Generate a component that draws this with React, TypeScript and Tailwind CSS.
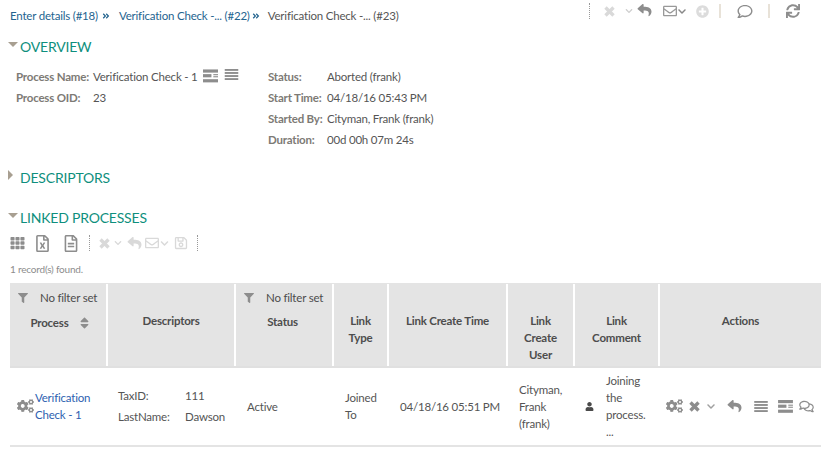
import { FaCogs, FaReply, FaRegEnvelope, FaPlusCircle, FaRegComment, FaSync, FaTh, FaRegFileExcel, FaRegFileAlt, FaRegSave, FaFilter, FaSort, FaUser, FaChevronDown, FaRegComments, FaAngleDoubleRight } from "react-icons/fa"

function XIcon({ className }: { className?: string }) {
  return (
    <svg viewBox="0 0 11 11" className={className} fill="none" stroke="currentColor" strokeWidth="3.4">
      <path d="M1.5 1.5 L9.5 9.5 M9.5 1.5 L1.5 9.5" />
    </svg>
  )
}

function LinesIcon({ className }: { className?: string }) {
  return (
    <svg viewBox="0 0 16 13" className={className} fill="currentColor">
      <rect x="0" y="0" width="16" height="2.2" />
      <rect x="0" y="3.6" width="16" height="2.2" />
      <rect x="0" y="7.2" width="16" height="2.2" />
      <rect x="0" y="10.8" width="16" height="2.2" />
    </svg>
  )
}

function DetailIcon({ className }: { className?: string }) {
  return (
    <svg viewBox="0 0 16 14" className={className} fill="currentColor">
      <rect x="0" y="0" width="16" height="3.4" />
      <rect x="0" y="5" width="9" height="3.4" />
      <rect x="11" y="5" width="5" height="1.2" />
      <rect x="11" y="7.2" width="5" height="1.2" />
      <rect x="0" y="10.4" width="16" height="3.4" />
    </svg>
  )
}

function Heading({ label, open }: { label: string; open: boolean }) {
  return (
    <div className="flex items-center h-5 pl-2">
      {open ? (
        <span className="w-0 h-0 border-x-[5px] border-x-transparent border-t-[5px] border-t-[#a89f91] mr-[2px] -mt-1" />
      ) : (
        <span className="w-0 h-0 border-y-[5px] border-y-transparent border-l-[5px] border-l-[#a89f91] mr-[7px] -mt-1" />
      )}
      <h2 className="text-[14px] text-[#0e8f7d] uppercase">{label}</h2>
    </div>
  )
}

function Field({ label, value, w }: { label: string; value: string; w: string }) {
  return (
    <div className="flex h-[21px] items-center whitespace-nowrap">
      <span className={`${w} font-bold text-[#7d7a75]`}>{label}</span>
      <span>{value}</span>
    </div>
  )
}

const headerCell = "bg-[#e4e4e4] flex flex-col items-center text-center font-bold text-[#4d4d4d] leading-[17px] pt-[28px]"
const filterRow = "flex items-center w-full h-[26px] pl-[8px] pt-[1px] font-normal text-[#4d4d4d] whitespace-nowrap"

export default function App() {
  return (
    <div className="w-[821px] h-[456px] overflow-hidden bg-white text-[11.5px] tracking-[-0.2px] text-[#555] font-['Lato',sans-serif]">
      {/* Breadcrumb + toolbar */}
      <div className="flex items-center h-[32px] pl-[10px]">
        <a className="text-[#24648f]">Enter details (#18)</a>
        <FaAngleDoubleRight className="w-[8px] h-[8px] ml-[4px] mr-[9px] text-[#24648f]" />
        <a className="text-[#24648f]">Verification Check -... (#22)</a>
        <FaAngleDoubleRight className="w-[8px] h-[8px] ml-[2px] mr-[8px] text-[#24648f]" />
        <span className="text-[#555]">Verification Check -... (#23)</span>
        <div className="ml-auto flex items-center h-[22px] pr-[21px] -mt-[10px]">
          <div className="border-l border-dotted border-[#999] h-[16px] mr-[14px]" />
          <XIcon className="w-[11px] h-[11px] text-[#d9d9d9] mr-[10px]" />
          <FaChevronDown className="w-[8px] h-[8px] text-[#cfcfcf] mr-[4px]" />
          <FaReply className="w-[15px] h-[14px] text-[#8d8d8d] mr-[11px] -mt-[2px]" />
          <FaRegEnvelope className="w-[14px] h-[14px] text-[#999]" />
          <FaChevronDown className="w-[10px] h-[9px] text-[#888] mr-[9px]" />
          <FaPlusCircle className="w-[13px] h-[13px] text-[#dcdcdc] mr-[10px]" />
          <div className="border-l-2 border-[#e8e2d8] h-[14px] mr-[16px]" />
          <FaRegComment className="w-[16px] h-[15px] text-[#8d8d8d] mr-[15px]" />
          <div className="border-l-2 border-[#e8e2d8] h-[14px] mr-[16px]" />
          <FaSync className="w-[14px] h-[14px] text-[#8d8d8d]" />
        </div>
      </div>

      {/* Overview */}
      <div className="mt-[4px]">
        <Heading label="Overview" open />
      </div>
      <div className="flex pl-[16px] mt-[10px]">
        <div className="w-[252px]">
          <div className="flex h-[21px] items-center whitespace-nowrap">
            <span className="w-[76px] font-bold text-[#7d7a75]">Process Name:</span>
            <span className="ml-[1px]">Verification Check - 1</span>
            <DetailIcon className="w-[15px] h-[14px] ml-[5px] text-[#8d8d8d] -mt-[2px]" />
            <LinesIcon className="w-[15px] h-[11px] ml-[6px] text-[#8d8d8d] -mt-[4px]" />
          </div>
          <Field label="Process OID:" value="23" w="w-[77px]" />
        </div>
        <div>
          <Field label="Status:" value="Aborted (frank)" w="w-[59px]" />
          <Field label="Start Time:" value="04/18/16 05:43 PM" w="w-[59px]" />
          <Field label="Started By:" value="Cityman, Frank (frank)" w="w-[59px]" />
          <Field label="Duration:" value="00d 00h 07m 24s" w="w-[59px]" />
        </div>
      </div>

      <div className="mt-[17px]">
        <Heading label="Descriptors" open={false} />
      </div>
      <div className="mt-[20px]">
        <Heading label="Linked Processes" open />
      </div>

      {/* Grid toolbar */}
      <div className="flex items-center h-[18px] pl-[10px] mt-[7px]">
        <FaTh className="w-[15px] h-[14px] text-[#8d8d8d] mr-[10px]" />
        <FaRegFileExcel className="w-[15px] h-[17px] text-[#8d8d8d] mr-[14px]" />
        <FaRegFileAlt className="w-[14px] h-[17px] text-[#8d8d8d] mr-[11px]" />
        <div className="border-l border-dotted border-[#999] h-[16px] mr-[9px]" />
        <XIcon className="w-[11px] h-[11px] text-[#d9d9d9] mr-[4px]" />
        <FaChevronDown className="w-[8px] h-[8px] text-[#d9d9d9] mr-[5px]" />
        <FaReply className="w-[15px] h-[14px] text-[#d9d9d9] mr-[3px]" />
        <FaRegEnvelope className="w-[14px] h-[14px] text-[#d9d9d9]" />
        <FaChevronDown className="w-[11px] h-[9px] text-[#d9d9d9] mr-[4px]" />
        <FaRegSave className="w-[14px] h-[14px] text-[#d9d9d9] mr-[9px]" />
        <div className="border-l border-dotted border-[#999] h-[16px]" />
      </div>

      <div className="pl-[10px] mt-[10px] text-[10px] leading-[14px] text-[#8d8d8d]">1 record(s) found.</div>

      {/* Linked processes table */}
      <div className="ml-[10px] mt-[7px] w-[811px]">
        <div className="grid grid-cols-[96px_126px_96px_53px_117px_65px_83px_1fr] gap-x-[2px] h-[85px] border-t border-[#e4e4e4] border-b-2 border-b-[#e0e0e0]">
          <div className="bg-[#e4e4e4] flex flex-col items-center font-bold text-[#4d4d4d]">
            <div className={filterRow}>
              <FaFilter className="w-[10px] h-[10px] text-[#8d8d8d] mr-[12px]" />
              No filter set
            </div>
            <div className="flex items-center mt-[1px] h-[24px] pl-[4px]">
              Process
              <FaSort className="w-[11px] h-[14px] ml-[10px] text-[#8d8d8d]" />
            </div>
          </div>
          <div className={headerCell}>Descriptors</div>
          <div className="bg-[#e4e4e4] flex flex-col items-center font-bold text-[#4d4d4d]">
            <div className={filterRow}>
              <FaFilter className="w-[10px] h-[10px] text-[#8d8d8d] mr-[12px]" />
              No filter set
            </div>
            <div className="flex items-center h-[24px] -ml-[3px]">Status</div>
          </div>
          <div className={headerCell}>Link<br />Type</div>
          <div className={headerCell}>Link Create Time</div>
          <div className={headerCell}>Link<br />Create<br />User</div>
          <div className={headerCell}>Link<br />Comment</div>
          <div className={headerCell}>Actions</div>
        </div>
        <div className="grid grid-cols-[96px_126px_96px_53px_117px_65px_83px_1fr] gap-x-[2px] h-[79px] pb-[1px] items-center leading-[17px] border-b-2 border-[#e4e4e4]">
          <div className="flex items-center pl-[7px]">
            <FaCogs className="w-[17px] h-[14px] text-[#8d8d8d] mr-[1px] shrink-0" />
            <a className="text-[#2d5fb0]">Verification<br />Check - 1</a>
          </div>
          <div className="pl-[10px] grid grid-cols-[67px_1fr] gap-y-[4px] leading-[17px]">
            <span>TaxID:</span>
            <span>111</span>
            <span>LastName:</span>
            <span>Dawson</span>
          </div>
          <div className="pl-[11px]">Active</div>
          <div className="pl-[11px]">Joined<br />To</div>
          <div className="pl-[11px] whitespace-nowrap">04/18/16 05:51 PM</div>
          <div className="pl-[11px]">Cityman,<br />Frank<br />(frank)</div>
          <div className="flex items-center pl-[10px]">
            <FaUser className="w-[9px] h-[9px] text-[#4a4a4a] mr-[12px] shrink-0" />
            <span>Joining<br />the<br />process.<br />...</span>
          </div>
          <div className="flex items-center pl-[6px] text-[#8d8d8d]">
            <FaCogs className="w-[17px] h-[14px] mr-[6px]" />
            <XIcon className="w-[11px] h-[11px] mr-[6px]" />
            <FaChevronDown className="w-[10px] h-[9px] mr-[11px] text-[#a0a0a0]" />
            <FaReply className="w-[15px] h-[14px] mr-[11px]" />
            <LinesIcon className="w-[16px] h-[11px] mr-[9px]" />
            <DetailIcon className="w-[15px] h-[13px] mr-[6px]" />
            <FaRegComments className="w-[15px] h-[13px]" />
          </div>
        </div>
      </div>
    </div>
  )
}
